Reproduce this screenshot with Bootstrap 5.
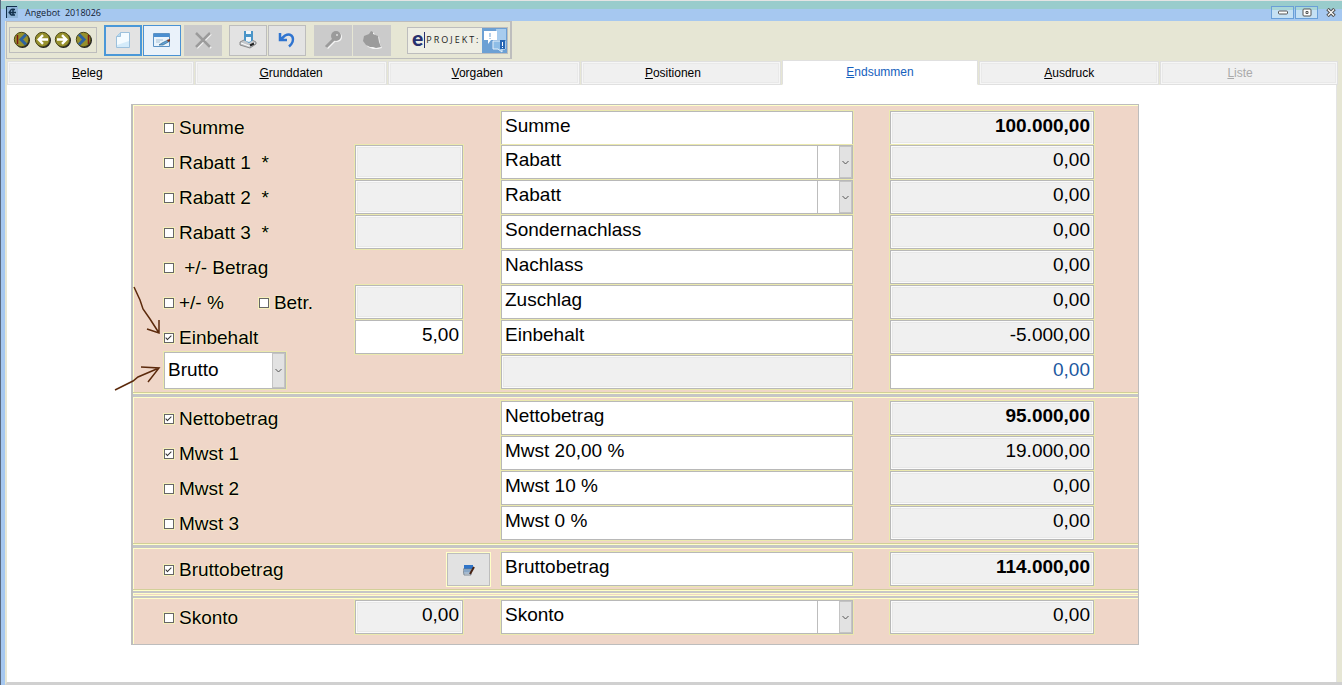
<!DOCTYPE html>
<html lang="de">
<head>
<meta charset="utf-8">
<meta name="viewport" content="width=device-width, initial-scale=1">
<title>Angebot 2018026</title>
<link rel="stylesheet" href="https://cdn.jsdelivr.net/npm/bootstrap@5.3.0/dist/css/bootstrap.min.css">
<style>
:root { --sand: #e6e6d4; --sky: #a6c8f0; --skin: #efd6c8; --cream: #ffffc8; --line: #bdbdbd; }
body { font-family: "Liberation Sans", Arial, sans-serif; font-size: 19px; line-height: 22px; color: #000; background: var(--sky); }
.app-window { border-left: 1px solid #5a6a80; }
.title-bar { height: 21px; border-top: 1px solid #e4e4e4; background: linear-gradient(#99cccc 8px, var(--sky) 8px); padding-left: 5px; }
.title-text { font: 9px/12px "Open Sans", sans-serif; margin: 6px 0 0 7px; color: #102030; white-space: pre; }
.app-mark { margin-top: 5px; }
.win-set { margin-top: 5px; gap: 1px; }
.win-btn { width: 23px; height: 13px; border: 1px solid #6a9fd8; background: linear-gradient(#a9d6d8 3px, #c5e0f4 3px); border-radius: 0; }
.win-btn.plain { border-color: transparent; background: none; }
.app-frame { margin-left: 4px; border-left: 2px solid var(--sand); background: var(--sand); border-bottom: 3px solid #d0d0d0; }
.tool-bar { height: 38px; border: 1px solid var(--line); border-right-width: 2px; padding: 0 2px 0 2px; width: max-content; margin: 0 0 1px -1px; }
.tool-bar svg { display: block; }
.tool-btn { width: 38px; height: 31px; border: 1px solid var(--line); background: #e3e3e3; border-radius: 0; }
.tool-btn.lit { background: #eaf2fa; border-color: #4a92d4; }
.tool-btn.sel { background: #e3e3e3; border: 2px solid #4a98d8; }
.tool-btn:disabled { background: #cbcbcb; border-color: #cbcbcb; opacity: 1; }
.tool-pair { display: flex; gap: 1px; margin-left: 7px; }
.tool-solo { margin-left: 3px; }
.nav-group { border: 1px solid var(--line); height: 26px; padding: 0 3px; width: 88px; }
.round-btn { width: 18px; height: 18px; border: 0; background: none; }
.brand-btn { border: 1px solid var(--line); background: #eeeee4; height: 27px; width: 101px; border-radius: 0; }
.brand-text { font: 9px/12px "Open Sans", sans-serif; letter-spacing: 2px; color: #222; }
.brand-e { font: 900 21px/18px Lato, sans-serif; color: #27306e; padding-bottom: 4px; }
.tab-row { padding-right: 4px; height: 25px; gap: 1px; }
.tab-row .nav-link { flex: 187 1 0; font-size: 12px; line-height: 14px; padding: 4px 0 0; margin: 1px 0 0; border: 1px solid #e0e0e0; border-radius: 0; background: #f0f0f0; color: #000; text-align: center; text-indent: -26px; box-shadow: inset 0 0 0 1px #f6f6f6, inset 0 0 0 2px #e9e9e9; }
.tab-row .tab-mid { flex-grow: 193; text-indent: 0; }
.tab-row .tab-vor { flex-grow: 192; text-indent: -14px; }
.tab-row .tab-pos { flex-grow: 200; text-indent: -16px; }
.tab-row .nav-link.active { flex-grow: 197; background: #fff; color: #1560bd; margin: 0; text-indent: 0; border-color: #e0e0e0 #e0e0e0 #fff; box-shadow: none; }
.tab-row .tab-end { flex-grow: 180; text-indent: 0; }
.tab-row .tab-off { flex-grow: 178; color: #aaa; text-indent: -18px; }
.work-area { background: #fff; margin-right: 5px; padding: 19px 197px 20px 124px; border-right: 1px solid #e4e4e4; }
.totals { background: var(--skin); border: 1px solid var(--line); border-left-width: 2px; padding: 6px 0 9px; box-shadow: inset 1px 1px var(--cream); }
.grid-block { display: grid; grid-template-columns: 192fr 108fr 38px 352fr 37px 204fr; grid-auto-rows: 35px; padding: 0 44px 0 30px; }
.grid-block.first { grid-template-rows: 34px; }
.c-lab { grid-column: 1; text-shadow: 0 0 2px var(--cream), 0 0 1px var(--cream); white-space: pre; }
.c-pct { grid-column: 2; }
.c-btn { grid-column: 2 / span 2; }
.c-txt { grid-column: 4; }
.c-sum { grid-column: 6; }
.box { height: 34px; width: 100%; min-width: 0; border: 1px solid #b8b8b8; border-radius: 0; background: #fff; padding: 0 3px 5px; color: #000; box-shadow: 0 0 0 1px #ebe9ae; outline: 0; }
.box[readonly] { background: #f0f0f0; box-shadow: 0 0 0 1px #ebe9ae, inset 0 0 0 1px #fbfbfb, inset 0 0 0 2px #e8e8e8; }
.box.blue { color: #1c58a0; }
.split { position: relative; height: 34px; border: 1px solid #b8b8b8; background: #fff; box-shadow: 0 0 0 1px #ebe9ae; }
.split input, .split select { border: 0; background: none; height: 100%; min-width: 0; padding: 0 3px 5px; appearance: none; outline: 0; color: #000; border-radius: 0; }
.split select { width: 35px; border-left: 1px solid var(--line); }
.split.kind { width: 122px; height: 37px; margin: -3px 0 0 1px; }
.split.kind select { width: 100%; border: 0; padding-bottom: 1px; }
.drop { position: absolute; right: 0; top: 0; bottom: 0; width: 13px; background: #e2e2e2; border: 1px solid #c4c4c4; pointer-events: none; }
.tick { appearance: none; width: 10px; height: 10px; margin: 0 5px 0 1px; border: 1px solid #666; background: #fff; box-shadow: 0 0 0 1px #f5efba; position: relative; flex: none; }
.tick:checked::after { content: ""; position: absolute; left: 2px; top: 0; width: 3px; height: 6px; border: solid #333; border-width: 0 1px 1px 0; transform: rotate(45deg); }
.second { margin-left: 34px; }
.rule { height: 5px; margin: 3px 0; border: solid var(--cream); border-width: 1px 0; background: #c6c6c6; box-shadow: 0 -1px #d2cf98; opacity: 1; }
.rule.thin { height: 4px; margin: 3px 0 0; }
.rule.thin + .rule.thin { margin: 1px 0 1px; box-shadow: none; }
.calc-btn { width: 43px; height: 33px; margin-right: 11px; border: 1px solid var(--line); background: #e2e2e2; box-shadow: 0 0 0 1px var(--cream); border-radius: 0; }
.pen-marks { position: absolute; left: -21px; top: 179px; pointer-events: none; }
</style>
</head>
<body>
<div class="app-window d-flex flex-column min-vh-100">
  <header class="title-bar d-flex align-items-start">
    <svg class="app-mark" width="12" height="12" viewBox="0 0 12 12"><path fill="#8fb4d8" d="M0 0h12v12H0z"/><path fill="none" stroke="#12304c" d="M.5 12V.5H11"/><path fill="none" stroke="#12304c" stroke-width="1.500" d="M2.500 6.500H10M5 3.500h4M5 9h4M5 3.500L3.500 6.500 5 9M7 2.500v7"/></svg>
    <div class="title-text">Angebot  2018026</div>
    <div class="win-set ms-auto d-flex">
      <button class="win-btn d-flex align-items-center justify-content-center p-0" aria-label="Minimieren"><svg width="10" height="5"><rect x=".5" y="1" width="9" height="3" rx="1" fill="#fff" stroke="#555"/></svg></button>
      <button class="win-btn d-flex align-items-center justify-content-center p-0" aria-label="Maximieren"><svg width="10" height="9"><rect x="1" y="1" width="8" height="7" rx="1" fill="#fff" stroke="#555"/><path fill="none" stroke="#555" d="M4 3.500h2v2h-2z"/></svg></button>
      <button class="win-btn plain d-flex align-items-center justify-content-center p-0" aria-label="Schließen"><svg width="10" height="9"><path d="M1.500 1l7 7m0-7l-7 7" stroke="#555" stroke-width="3.500"/><path d="M2 1.500l6 6m0-6l-6 6" stroke="#fff" stroke-width="1.200"/></svg></button>
    </div>
  </header>

  <div class="app-frame d-flex flex-column flex-grow-1">
    <div class="tool-bar d-flex align-items-center">
      <div class="nav-group d-flex align-items-center justify-content-between">
        <button class="round-btn p-0" aria-label="Erster"><svg width="18" height="18" viewBox="0 0 18 18"><circle cx="9.500" cy="9.500" r="7.500" fill="#222"/><circle cx="8.500" cy="8.500" r="7.200" fill="#96902c" stroke="#4a4718"/><path d="M4.500 4v9" stroke="#7c1c14" stroke-width="1.500"/><path d="M13 3.500L8 8.500l5 5" fill="none" stroke="#2c62a0" stroke-width="3"/></svg></button>
        <button class="round-btn p-0" aria-label="Zurück"><svg width="18" height="18" viewBox="0 0 18 18"><circle cx="9.500" cy="9.500" r="7.500" fill="#222"/><circle cx="8.500" cy="8.500" r="7.200" fill="#96902c" stroke="#4a4718"/><path d="M14 8.500H5M9 4.200L4.700 8.500 9 12.800" fill="none" stroke="#fff" stroke-width="2.400"/></svg></button>
        <button class="round-btn p-0" aria-label="Weiter"><svg width="18" height="18" viewBox="0 0 18 18"><circle cx="9.500" cy="9.500" r="7.500" fill="#222"/><circle cx="8.500" cy="8.500" r="7.200" fill="#96902c" stroke="#4a4718"/><path d="M3 8.500h9M8 4.200l4.300 4.300L8 12.800" fill="none" stroke="#fff" stroke-width="2.400"/></svg></button>
        <button class="round-btn p-0" aria-label="Letzter"><svg width="18" height="18" viewBox="0 0 18 18"><circle cx="9.500" cy="9.500" r="7.500" fill="#222"/><circle cx="8.500" cy="8.500" r="7.200" fill="#96902c" stroke="#4a4718"/><path d="M4 3.500l5 5-5 5" fill="none" stroke="#2c62a0" stroke-width="3"/><path d="M13.500 4v9" stroke="#7c1c14" stroke-width="1.500"/></svg></button>
      </div>
      <div class="tool-pair">
        <button class="tool-btn sel p-0 d-flex align-items-center justify-content-center" aria-label="Neu"><svg width="16" height="18" viewBox="0 0 16 18"><path d="M1.500 5.500l4-4h9v15h-13z" fill="#d4ebfa" stroke="#9cc0dc"/><path d="M6 2h8v8L2 14V6z" fill="#f4fbff"/><path d="M1.500 5.500h4v-4" fill="#b8d8ee" stroke="#9cc0dc"/></svg></button>
        <button class="tool-btn lit p-0 d-flex align-items-center justify-content-center" aria-label="Bearbeiten"><svg width="18" height="16" viewBox="0 0 18 16"><path d="M.5 1.500h16v13H.5z" fill="#eaf4fc" stroke="#5c92c4"/><path d="M1 2h15v3H1z" fill="#4a8ed0"/><path d="M3 8h7M3 10h4" stroke="#a8c0d4"/><path d="M6 13l3-2 6-3 2 1-7 4z" fill="#64a4d8" stroke="#35688c" stroke-width=".7"/><path d="M14 8l3-1v2l-2 1z" fill="#813a22"/></svg></button>
      </div>
      <button class="tool-btn tool-solo p-0 d-flex align-items-center justify-content-center" disabled aria-label="Löschen"><svg width="18" height="18" viewBox="0 0 18 18"><path d="M3 3l14 14M17 3L3 17" stroke="#f4f4f4" stroke-width="2"/><path d="M2 2l14 14M16 2L2 16" stroke="#9b9b9b" stroke-width="2.500"/></svg></button>
      <div class="tool-pair">
        <button class="tool-btn p-0 d-flex align-items-center justify-content-center" aria-label="Speichern"><svg width="20" height="18" viewBox="0 0 20 18"><path d="M2 11l4-2h8l4 2v2l-6 4-10-3z" fill="#c4c8cc" stroke="#777" stroke-width=".8"/><path d="M6 0h9v9l-4 3-5-3z" fill="#4a95c8"/><path d="M8 0h5v3H8zM8 6h5v4l-2 1-3-1z" fill="#f2f7fa"/><path d="M3 12l8 3 6-3" stroke="#fff" fill="none"/><path d="M12 14.500l4-2" stroke="#222" stroke-width="2"/></svg></button>
        <button class="tool-btn p-0 d-flex align-items-center justify-content-center" aria-label="Rückgängig"><svg width="18" height="18" viewBox="0 0 18 18"><path d="M2 2v7h7M2.500 8.500L7 4.500c8-4 11 5 4 11" fill="none" stroke="#2f74d0" stroke-width="2.500"/></svg></button>
      </div>
      <div class="tool-pair ms-2">
        <button class="tool-btn p-0 d-flex align-items-center justify-content-center" disabled aria-label="Schlüssel"><svg width="20" height="20" viewBox="0 0 20 20"><path d="M4 18l8-8" stroke="#f4f4f4" stroke-width="3"/><circle cx="14" cy="7" r="5" fill="#f4f4f4"/><path d="M3 17l8-8" stroke="#9b9b9b" stroke-width="3"/><circle cx="13" cy="6" r="5" fill="#9b9b9b"/><circle cx="14" cy="5" r="1" fill="#ddd"/></svg></button>
        <button class="tool-btn p-0 d-flex align-items-center justify-content-center" disabled aria-label="Apfel"><svg width="20" height="20" viewBox="0 0 20 20"><path d="M3 7l5-2 2-3 2 1 1 2 4 2 1 7 2 4-4 1h-5l-5-2-3-4z" fill="#f4f4f4"/><path d="M2 6l5-2 2-3 2 1 0 2 5 2 1 6 2 5-5 1-3-1h-3l-4-2-3-4z" fill="#9b9b9b"/></svg></button>
      </div>
      <button class="brand-btn d-flex align-items-center p-0 ms-3" aria-label="eProjekt">
        <span class="brand-e ms-1">e</span><svg width="3" height="16"><path d="M1.500 0v16" stroke="#27306e"/></svg><span class="brand-text">PROJEKT:</span>
        <svg class="ms-auto flex-shrink-0" width="25" height="25" viewBox="0 0 25 25"><path fill="#6ca0d4" d="M0 0h25v25H0z"/><path fill="#a8ccee" d="M14 1h10v11H14z"/><path fill="#fff" d="M2 3h13v9H9l-3 4v-4H2z"/><path d="M8 5v4M8 10v1" stroke="#6ca0d4"/><path d="M11 13h12v8h-3v3l-4-3h-5z" fill="#8ebde6" stroke="#e4f0fa"/><path fill="#2867b4" d="M18 12h5v9h-5z"/><path d="M20.500 14v4M20.500 19v1" stroke="#fff"/></svg>
      </button>
    </div>

    <nav class="tab-row nav flex-nowrap">
      <a class="nav-link" href="#"><u>B</u>eleg</a>
      <a class="nav-link tab-mid" href="#"><u>G</u>runddaten</a>
      <a class="nav-link tab-vor" href="#"><u>V</u>orgaben</a>
      <a class="nav-link tab-pos" href="#"><u>P</u>ositionen</a>
      <a class="nav-link active" href="#" aria-current="page"><u>E</u>ndsummen</a>
      <a class="nav-link tab-end" href="#"><u>A</u>usdruck</a>
      <a class="nav-link tab-off" href="#" aria-disabled="true"><u>L</u>iste</a>
    </nav>

    <main class="work-area flex-grow-1">
      <form class="totals position-relative">
        <div class="grid-block first">
          <label class="c-lab d-flex align-items-center"><input class="tick" type="checkbox">Summe</label>
          <input class="box c-txt" value="Summe" aria-label="Text Summe">
          <input class="box c-sum text-end fw-bold" readonly value="100.000,00" aria-label="Betrag Summe">

          <label class="c-lab d-flex align-items-center"><input class="tick" type="checkbox">Rabatt 1&nbsp; *</label>
          <input class="box c-pct" readonly aria-label="Prozent Rabatt 1">
          <div class="split c-txt d-flex"><input class="flex-grow-1" value="Rabatt" aria-label="Text Rabatt 1"><select aria-label="Auswahl Rabatt 1"><option></option></select><span class="drop d-flex align-items-center justify-content-center"><svg width="7" height="5"><path d="M.5 1l3 3 3-3" fill="none" stroke="#555"/></svg></span></div>
          <input class="box c-sum text-end" readonly value="0,00" aria-label="Betrag Rabatt 1">

          <label class="c-lab d-flex align-items-center"><input class="tick" type="checkbox">Rabatt 2&nbsp; *</label>
          <input class="box c-pct" readonly aria-label="Prozent Rabatt 2">
          <div class="split c-txt d-flex"><input class="flex-grow-1" value="Rabatt" aria-label="Text Rabatt 2"><select aria-label="Auswahl Rabatt 2"><option></option></select><span class="drop d-flex align-items-center justify-content-center"><svg width="7" height="5"><path d="M.5 1l3 3 3-3" fill="none" stroke="#555"/></svg></span></div>
          <input class="box c-sum text-end" readonly value="0,00" aria-label="Betrag Rabatt 2">

          <label class="c-lab d-flex align-items-center"><input class="tick" type="checkbox">Rabatt 3&nbsp; *</label>
          <input class="box c-pct" readonly aria-label="Prozent Rabatt 3">
          <input class="box c-txt" value="Sondernachlass" aria-label="Text Rabatt 3">
          <input class="box c-sum text-end" readonly value="0,00" aria-label="Betrag Rabatt 3">

          <label class="c-lab d-flex align-items-center"><input class="tick" type="checkbox">&nbsp;+/- Betrag</label>
          <input class="box c-txt" value="Nachlass" aria-label="Text Nachlass">
          <input class="box c-sum text-end" readonly value="0,00" aria-label="Betrag Nachlass">

          <div class="c-lab d-flex align-items-center"><label class="d-flex align-items-center"><input class="tick" type="checkbox">+/- %</label><label class="second d-flex align-items-center"><input class="tick" type="checkbox">Betr.</label></div>
          <input class="box c-pct" readonly aria-label="Prozent Zuschlag">
          <input class="box c-txt" value="Zuschlag" aria-label="Text Zuschlag">
          <input class="box c-sum text-end" readonly value="0,00" aria-label="Betrag Zuschlag">

          <label class="c-lab d-flex align-items-center"><input class="tick" type="checkbox" checked>Einbehalt</label>
          <input class="box c-pct text-end" value="5,00" aria-label="Prozent Einbehalt">
          <input class="box c-txt" value="Einbehalt" aria-label="Text Einbehalt">
          <input class="box c-sum text-end" readonly value="-5.000,00" aria-label="Betrag Einbehalt">

          <div class="split kind d-flex"><select aria-label="Berechnungsart"><option>Brutto</option></select><span class="drop d-flex align-items-center justify-content-center"><svg width="7" height="5"><path d="M.5 1l3 3 3-3" fill="none" stroke="#555"/></svg></span></div>
          <input class="box c-txt" readonly aria-label="Zusatztext">
          <input class="box blue c-sum text-end" value="0,00" aria-label="Zusatzbetrag">
        </div>
        <hr class="rule">
        <div class="grid-block">
          <label class="c-lab d-flex align-items-center"><input class="tick" type="checkbox" checked>Nettobetrag</label>
          <input class="box c-txt" value="Nettobetrag" aria-label="Text Nettobetrag">
          <input class="box c-sum text-end fw-bold" readonly value="95.000,00" aria-label="Betrag netto">
          <label class="c-lab d-flex align-items-center"><input class="tick" type="checkbox" checked>Mwst 1</label>
          <input class="box c-txt" value="Mwst 20,00 %" aria-label="Text Mwst 1">
          <input class="box c-sum text-end" readonly value="19.000,00" aria-label="Betrag Mwst 1">
          <label class="c-lab d-flex align-items-center"><input class="tick" type="checkbox">Mwst 2</label>
          <input class="box c-txt" value="Mwst 10 %" aria-label="Text Mwst 2">
          <input class="box c-sum text-end" readonly value="0,00" aria-label="Betrag Mwst 2">
          <label class="c-lab d-flex align-items-center"><input class="tick" type="checkbox">Mwst 3</label>
          <input class="box c-txt" value="Mwst 0 %" aria-label="Text Mwst 3">
          <input class="box c-sum text-end" readonly value="0,00" aria-label="Betrag Mwst 3">
        </div>
        <hr class="rule">
        <div class="grid-block">
          <label class="c-lab d-flex align-items-center"><input class="tick" type="checkbox" checked>Bruttobetrag</label>
          <div class="c-btn d-flex justify-content-end align-items-center"><button type="button" class="calc-btn p-0 d-flex align-items-center justify-content-center" aria-label="Berechnen"><svg width="12" height="12" viewBox="0 0 12 12"><path d="M1 1h9v4H1z" fill="#2f74c8"/><path d="M0 5h8v6H1z" fill="#d8dce0" stroke="#6a7888" stroke-width=".8"/><path d="M2 5v5M4 5v5M6 5v5M1 7h7" stroke="#5c88b8" stroke-width=".8"/><path d="M11 3l-4 7" stroke="#4a2414" stroke-width="2"/></svg></button></div>
          <input class="box c-txt" value="Bruttobetrag" aria-label="Text Bruttobetrag">
          <input class="box c-sum text-end fw-bold" readonly value="114.000,00" aria-label="Betrag brutto">
        </div>
        <hr class="rule thin">
        <hr class="rule thin">
        <div class="grid-block">
          <label class="c-lab d-flex align-items-center"><input class="tick" type="checkbox">Skonto</label>
          <input class="box c-pct text-end" readonly value="0,00" aria-label="Prozent Skonto">
          <div class="split c-txt d-flex"><input class="flex-grow-1" value="Skonto" aria-label="Text Skonto"><select aria-label="Auswahl Skonto"><option></option></select><span class="drop d-flex align-items-center justify-content-center"><svg width="7" height="5"><path d="M.5 1l3 3 3-3" fill="none" stroke="#555"/></svg></span></div>
          <input class="box c-sum text-end" readonly value="0,00" aria-label="Betrag Skonto">
        </div>
        <svg class="pen-marks" width="52" height="110" viewBox="0 0 52 110" fill="none" stroke="#5c2a0c" stroke-width="1.500"><path d="M22 3l6 13 3 9 7 10 9 14M47 36v13l-12-4M3 106l18-9 5-4 21-9M29 83l18 1-11 14"/></svg>
      </form>
    </main>
  </div>
</div>
<script src="https://cdn.jsdelivr.net/npm/bootstrap@5.3.0/dist/js/bootstrap.bundle.min.js"></script>
</body>
</html>
